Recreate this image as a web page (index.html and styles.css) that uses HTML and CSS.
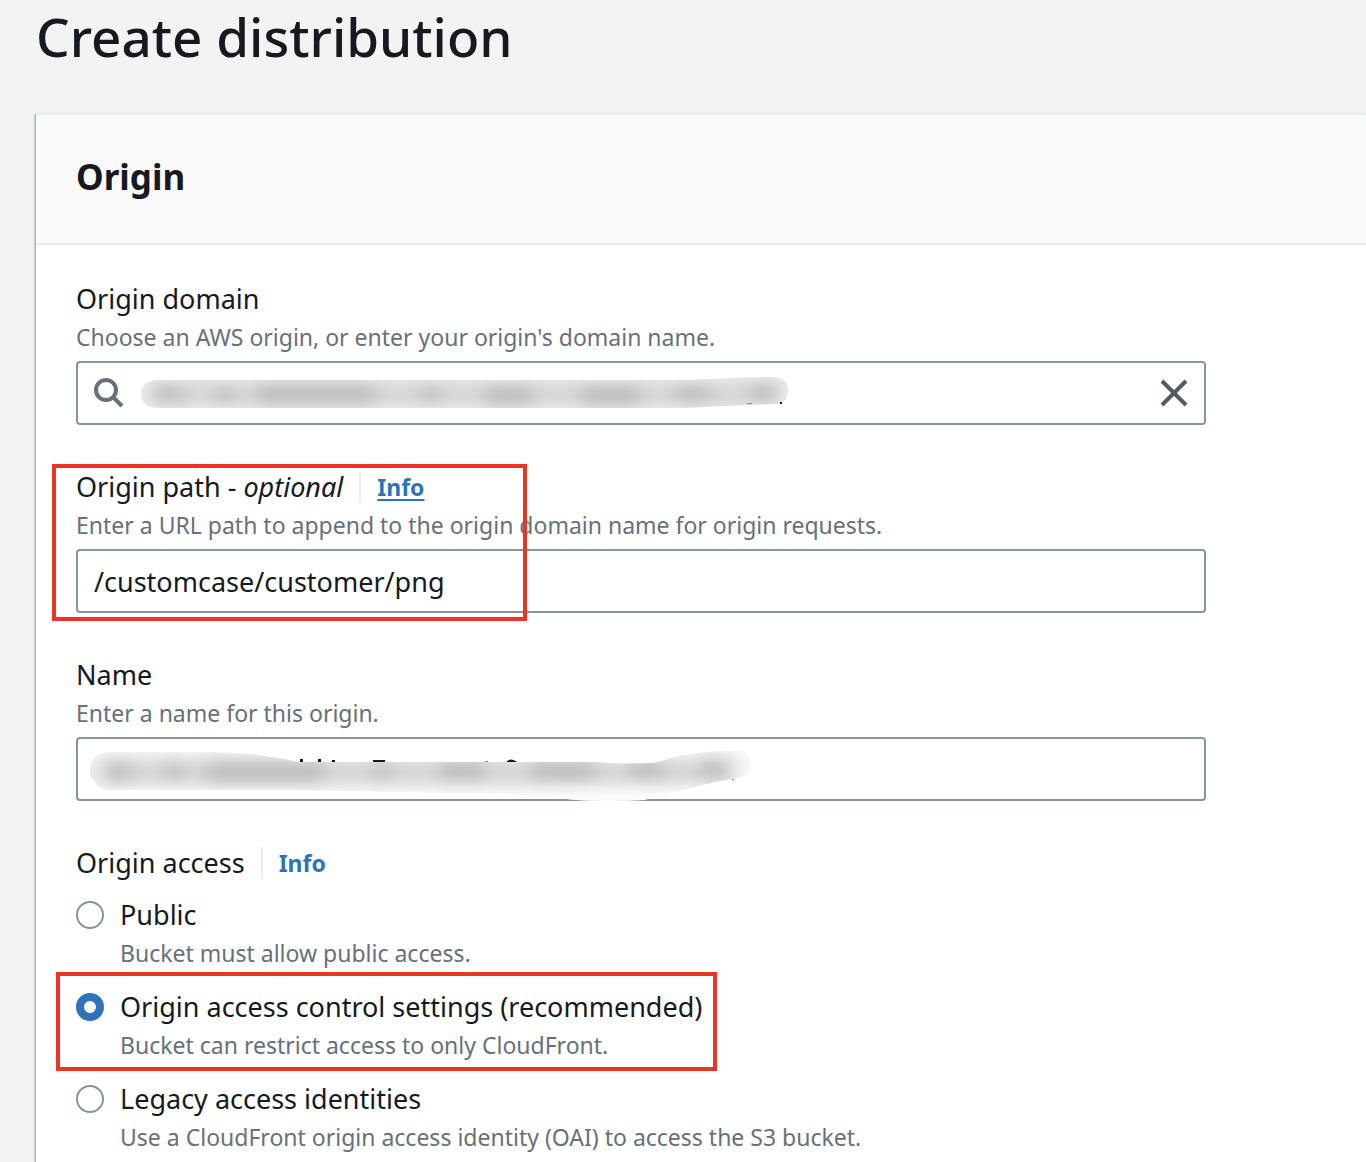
FILE: index.html
```html
<!DOCTYPE html>
<html lang="en">
<head>
<meta charset="utf-8">
<meta name="viewport" content="width=device-width, initial-scale=1">
<title>Create distribution</title>
<link rel="stylesheet" href="styles.css">
</head>
<body>
<main class="page">
  <h1 class="page-title">Create distribution</h1>
  <section class="card">
    <header class="card-header"><h2 class="card-title">Origin</h2></header>
    <form class="form">
      <div class="field">
        <div class="label-row"><label class="label" for="domain">Origin domain</label></div>
        <p class="hint" id="domain-hint">Choose an AWS origin, or enter your origin's domain name.</p>
        <div class="control">
          <svg class="search-icon" viewBox="0 0 32 32" aria-hidden="true"><circle cx="14" cy="13" r="10"/><path d="M21 20l9 9"/></svg>
          <input class="input input-bare" id="domain" type="text" aria-describedby="domain-hint">
          <button class="clear" type="button" aria-label="Clear"><svg viewBox="0 0 28 28" aria-hidden="true"><path d="M2 2l24 24M26 2L2 26"/></svg></button>
          <svg class="smudge" viewBox="0 0 720 64" aria-hidden="true">
            <defs>
              <clipPath id="domain-shape"><path d="M79 19H610C640 18 665 16 700 16Q712 18 712 30Q712 41 701 43C660 44 640 46 610 47H79Q65 45 65 33Q65 21 79 19Z"/></clipPath>
              <filter id="soft" x="-20%" y="-200%" width="140%" height="500%"><feGaussianBlur stdDeviation="8"/></filter>
            </defs>
            <g clip-path="url(#domain-shape)">
              <path class="smudge-base" d="M60 10H716V50H60z"/>
              <g class="smudge-ink" filter="url(#soft)">
                <path class="smudge-band" d="M76 24H702V42H76z"/>
                <path d="M76 25h32v16H76zM140 27h20v14h-20zM180 23h118v20H180zM345 25h18v16h-18zM410 24h46v20h-46zM506 24h58v20h-58zM600 24h34v18h-34zM674 23h28v16h-28z"/>
              </g>
            </g>
            <path class="smudge-trace smudge-faint" d="M671 42h5v1h-5z"/>
            <path class="smudge-trace" d="M704 41h2v2h-2z"/>
          </svg>
        </div>
      </div>

      <div class="field">
        <div class="label-row">
          <label class="label" for="path">Origin path - <em>optional</em></label>
          <a class="info info-active" href="#path">Info</a>
        </div>
        <p class="hint" id="path-hint">Enter a URL path to append to the origin domain name for origin requests.</p>
        <div class="control"><input class="input" id="path" type="text" value="/customcase/customer/png" aria-describedby="path-hint"></div>
        <span class="mark mark-path"></span>
      </div>

      <div class="field">
        <div class="label-row"><label class="label" for="name">Name</label></div>
        <p class="hint" id="name-hint">Enter a name for this origin.</p>
        <div class="control">
          <input class="input" id="name" type="text" aria-describedby="name-hint">
          <svg class="smudge" viewBox="0 0 720 64" aria-hidden="true">
            <defs><clipPath id="name-shape"><path d="M30 15H130C180 16 190 19 223 25H520C540 27 570 27 583 25C610 15 635 14 664 14Q675 16 675 27Q675 38 664 40C630 46 600 55 568 63Q530 65 500 63C460 58 430 56 390 56L220 53H30Q21 52 18 43Q14 41 14 33Q14 19 30 15Z"/></clipPath></defs>
            <g clip-path="url(#name-shape)">
              <path class="smudge-base" d="M10 10H680V66H10z"/>
              <path class="smudge-fade" filter="url(#soft)" d="M0 -6H240V15H0zM0 52H680V76H0zM480 49H620V76H480zM600 0H680V16H600zM668 6H684V50H668z"/>
              <g class="smudge-ink" filter="url(#soft)">
                <path class="smudge-band" d="M28 26H654V44H28z"/>
                <path d="M28 26h26v18H28zM90 26h18v16H90zM130 25h118v20H130zM298 26h16v16h-16zM364 24h44v20h-44zM456 24h62v20h-62zM554 24h32v18h-32zM624 24h28v16h-28z"/>
              </g>
            </g>
            <path class="smudge-trace" d="M224 22h3v3h-3zM242 22h3v3h-3zM256 23h3v2h-3zM297 23h12v2h-12zM430 25Q435 20 441 25z"/>
            <path class="smudge-trace smudge-faint" d="M409 24h3v1h-3zM656 42h2v1h-2z"/>
          </svg>
        </div>
      </div>

      <fieldset class="field options">
        <legend class="label-row"><span class="label">Origin access</span><a class="info" href="#access">Info</a></legend>
        <div class="option-list" id="access">
          <div class="option">
            <input class="radio" type="radio" name="access" id="public" aria-describedby="public-hint">
            <div><label class="label" for="public">Public</label><p class="hint" id="public-hint">Bucket must allow public access.</p></div>
          </div>
          <div class="option">
            <input class="radio" type="radio" name="access" id="oac" aria-describedby="oac-hint" checked>
            <div><label class="label" for="oac">Origin access control settings (recommended)</label><p class="hint" id="oac-hint">Bucket can restrict access to only CloudFront.</p></div>
            <span class="mark mark-option"></span>
          </div>
          <div class="option">
            <input class="radio" type="radio" name="access" id="oai" aria-describedby="oai-hint">
            <div><label class="label" for="oai">Legacy access identities</label><p class="hint" id="oai-hint">Use a CloudFront origin access identity (OAI) to access the S3 bucket.</p></div>
          </div>
        </div>
      </fieldset>
    </form>
  </section>
</main>
</body>
</html>
```
FILE: styles.css
```css
* { box-sizing: border-box; }

body {
  margin: 0;
  background: #f2f4f3;
  color: #16191f;
  font-family: "Noto Sans", "Open Sans", sans-serif;
  font-size: 27px;
  font-weight: 400;
  line-height: 44px;
}

h1, h2, p { margin: 0; }

.page { padding-left: 36px; }

.page-title {
  height: 113px;
  font-size: 53px;
  font-weight: 500;
  line-height: 74px;
}

.card {
  background: #fff;
  border-top: 2px solid #eaeded;
  box-shadow: -1px 1px 2px #879596;
}

.card-header {
  padding: 38px 40px 42px;
  background: #fafafa;
  border-bottom: 2px solid #eaeded;
}

.card-title {
  font-size: 35px;
  font-weight: 700;
  line-height: 48px;
}

.form {
  display: grid;
  gap: 40px;
  max-width: 1210px;
  padding: 32px 40px 9px;
}

.field { position: relative; min-width: 0; }

.label-row {
  display: flex;
  align-items: center;
  gap: 16px;
  padding: 0;
}

.label { display: block; }

.hint {
  color: #687078;
  font-size: 23px;
  line-height: 32px;
}

.info {
  padding-left: 16px;
  border-left: 2px solid #eaeded;
  color: #2e73b8;
  font-size: 23px;
  font-weight: 700;
  line-height: 32px;
  text-decoration: none;
}

.info-active {
  text-decoration: underline;
  text-decoration-thickness: 2px;
  text-underline-offset: 3px;
}

.control {
  position: relative;
  display: flex;
  align-items: center;
  height: 64px;
  margin-top: 8px;
  border: 2px solid #879596;
  border-radius: 4px;
  background: #fff;
}

.input {
  flex: 1;
  min-width: 0;
  height: 100%;
  padding: 0 16px;
  border: 0;
  outline: 0;
  background: transparent;
  color: inherit;
  font: inherit;
}

.input-bare { padding-left: 18px; }

.search-icon {
  width: 32px;
  height: 32px;
  margin-left: 14px;
  fill: none;
  stroke: #687078;
  stroke-width: 4;
}

.clear {
  display: flex;
  margin-right: 16px;
  padding: 0;
  border: 0;
  background: none;
}

.clear svg {
  width: 28px;
  height: 28px;
  fill: none;
  stroke: #545b64;
  stroke-width: 4;
}

.smudge {
  position: absolute;
  top: -2px;
  left: -2px;
  width: 720px;
  height: 64px;
  pointer-events: none;
}

.smudge-base { fill: #ececec; }
.smudge-ink { fill: #b8b9bc; }
.smudge-band { fill: #d0d0d1; }
.smudge-fade { fill: #fcfdfd; }
.smudge-trace { fill: #16191f; }
.smudge-faint { fill: #8a8c8f; }

.options {
  margin: 0;
  padding: 0;
  border: 0;
}

.option-list {
  display: grid;
  gap: 16px;
  padding-top: 8px;
}

.option {
  position: relative;
  display: flex;
  gap: 16px;
}

.radio {
  appearance: none;
  flex: none;
  width: 28px;
  height: 28px;
  margin: 8px 0;
  border: 2px solid #879596;
  border-radius: 50%;
  background: #fff;
}

.radio:checked { border: 8px solid #2e73b8; }

.mark {
  position: absolute;
  border: 4px solid #eb3326;
  pointer-events: none;
}

.mark-path {
  top: -1px;
  left: -24px;
  width: 475px;
  height: 157px;
}

.mark-option {
  top: -13px;
  left: -20px;
  width: 661px;
  height: 99px;
}
```
